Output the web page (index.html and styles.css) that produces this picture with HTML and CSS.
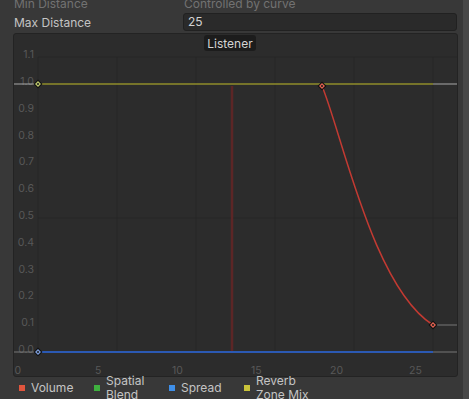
FILE: index.html
```html
<!DOCTYPE html>
<html lang="en">
<head>
  <meta charset="UTF-8">
  <title>Audio Source 3D Sound Settings</title>
  <link rel="stylesheet" href="styles.css">
</head>
<body>
  <div class="inspector">
    <div class="rows">
      <div class="row dimmed">
        <span class="label">Min Distance</span>
        <span class="value">Controlled by curve</span>
      </div>
      <div class="row">
        <span class="label">Max Distance</span>
        <span class="field">25</span>
      </div>
    </div>

    <div class="curve-box">
      <svg class="curve" width="443" height="342" viewBox="0 0 443 342">
        <!-- grid -->
        <g class="grid">
          <line x1="24" y1="23" x2="443" y2="23"/>
          <line x1="24" y1="184" x2="443" y2="184"/>
          <line x1="24" y1="23" x2="24" y2="318"/>
          <line x1="103" y1="23" x2="103" y2="318"/>
          <line x1="182" y1="23" x2="182" y2="318"/>
          <line x1="261" y1="23" x2="261" y2="318"/>
          <line x1="340" y1="23" x2="340" y2="318"/>
          <line x1="419" y1="23" x2="419" y2="318"/>
        </g>

        <!-- y axis -->
        <g class="axis-y">
          <text x="20" y="24.2">1.1</text>
          <text x="20" y="51">1.0</text>
          <text x="20" y="77.8">0.9</text>
          <text x="20" y="104.6">0.8</text>
          <text x="20" y="131.4">0.7</text>
          <text x="20" y="158.2">0.6</text>
          <text x="20" y="185">0.5</text>
          <text x="20" y="211.8">0.4</text>
          <text x="20" y="238.6">0.3</text>
          <text x="20" y="265.4">0.2</text>
          <text x="20" y="292.2">0.1</text>
          <text x="20" y="319">0.0</text>
        </g>

        <!-- x axis -->
        <g class="axis-x">
          <text x="0.5" y="340">0</text>
          <text x="81" y="340">5</text>
          <text x="158" y="340">10</text>
          <text x="237" y="340">15</text>
          <text x="316" y="340">20</text>
          <text x="395" y="340">25</text>
        </g>

        <!-- listener -->
        <line class="listener" x1="218" y1="52" x2="218" y2="318"/>

        <!-- wrap extensions -->
        <g class="wrap">
          <line class="bright" x1="0" y1="50" x2="24" y2="50"/>
          <line class="bright" x1="419" y1="50" x2="444" y2="50"/>
          <line x1="419" y1="291" x2="444" y2="291"/>
          <line x1="0" y1="318" x2="24" y2="318"/>
          <line x1="419" y1="318" x2="444" y2="318"/>
        </g>

        <!-- curves -->
        <line class="reverb" x1="24" y1="50" x2="419" y2="50"/>
        <path class="volume" d="M308,52 C328,100 359,253 419,291"/>
        <line class="spread" x1="24" y1="318" x2="419" y2="318"/>

        <!-- keys -->
        <g class="key key-reverb" transform="translate(24,50)">
          <path class="key-out" d="M0,-4.5 L4.5,0 L0,4.5 L-4.5,0 Z"/>
          <path class="key-in" d="M0,-3 L3,0 L0,3 L-3,0 Z"/>
          <circle class="key-dot" r="1"/>
        </g>
        <g class="key key-volume" transform="translate(308,52)">
          <path class="key-out" d="M0,-4.5 L4.5,0 L0,4.5 L-4.5,0 Z"/>
          <path class="key-in" d="M0,-3 L3,0 L0,3 L-3,0 Z"/>
          <circle class="key-dot" r="1"/>
        </g>
        <g class="key key-volume" transform="translate(419,291)">
          <path class="key-out" d="M0,-4.5 L4.5,0 L0,4.5 L-4.5,0 Z"/>
          <path class="key-in" d="M0,-3 L3,0 L0,3 L-3,0 Z"/>
          <circle class="key-dot" r="1"/>
        </g>
        <g class="key key-spread" transform="translate(24,318)">
          <path class="key-out" d="M0,-4.5 L4.5,0 L0,4.5 L-4.5,0 Z"/>
          <path class="key-in" d="M0,-3 L3,0 L0,3 L-3,0 Z"/>
          <circle class="key-dot" r="1"/>
        </g>

        <!-- listener tag -->
        <rect class="tag" x="190" y="1" width="52" height="16" rx="3"/>
        <text class="tag-text" x="216" y="13.5">Listener</text>
      </svg>
    </div>

    <div class="legend">
      <div class="legend-item"><span class="swatch red"></span><span>Volume</span></div>
      <div class="legend-item"><span class="swatch green"></span><span>Spatial<br>Blend</span></div>
      <div class="legend-item"><span class="swatch blue"></span><span>Spread</span></div>
      <div class="legend-item"><span class="swatch yellow"></span><span>Reverb<br>Zone Mix</span></div>
    </div>
  </div>
  <div class="scrollbar"></div>
</body>
</html>
```

FILE: styles.css
```css
html, body {
  margin: 0;
  height: 100%;
}
body {
  display: flex;
  background: #383838;
  font-family: Inter, "Noto Sans", sans-serif;
  font-size: 12px;
  color: #c4c4c4;
  overflow: hidden;
}
.inspector {
  flex: 1;
  padding: 0 5px 0 13px;
  display: flex;
  flex-direction: column;
}
.scrollbar {
  width: 6px;
  background: #474747;
}
.rows {
  margin-top: -6px;
  display: flex;
  flex-direction: column;
  gap: 1px;
}
.row {
  height: 18px;
  display: flex;
  align-items: center;
}
.row .label {
  width: 169px;
  padding-left: 1px;
}
.dimmed {
  color: #727272;
}
.dimmed .value {
  padding-left: 1px;
}
.field {
  flex: 1;
  height: 18px;
  box-sizing: border-box;
  margin-right: 1px;
  padding: 0 4px;
  line-height: 16px;
  background: #2a2a2a;
  border: 1px solid #212121;
  border-radius: 3px;
  color: #d2d2d2;
}
.curve-box {
  margin-top: 2px;
  height: 344px;
  box-sizing: border-box;
  background: #2c2c2c;
  border: 1px solid #232323;
  border-radius: 3px;
  overflow: hidden;
}
.curve {
  display: block;
}
.grid line {
  stroke: #262626;
  stroke-width: 1;
}
.axis-y text,
.axis-x text {
  font-family: Inter, "Noto Sans", sans-serif;
  font-size: 10.5px;
  fill: #585858;
}
.axis-y text {
  text-anchor: end;
}
.listener {
  stroke: #5c2626;
  stroke-width: 2.5;
}
.wrap line {
  stroke: #767676;
  stroke-width: 1;
}
.wrap line.bright {
  stroke: #a8a8a8;
}
.reverb {
  stroke: #8f8d2a;
  stroke-width: 1.5;
}
.volume {
  fill: none;
  stroke: #c23a32;
  stroke-width: 1.5;
}
.spread {
  stroke: #2b59b3;
  stroke-width: 2;
}
.key-out {
  fill: #111;
}
.key-dot {
  fill: #1a1a1a;
}
.key-reverb .key-in {
  fill: #b9c46a;
}
.key-volume .key-in {
  fill: #e06050;
}
.key-spread .key-in {
  fill: #7a9ad6;
}
.tag {
  fill: #1c1c1c;
}
.tag-text {
  font-family: Inter, "Noto Sans", sans-serif;
  font-size: 12px;
  fill: #d4d4d4;
  text-anchor: middle;
}
.legend {
  height: 22px;
  display: flex;
  align-items: center;
  padding-left: 6px;
}
.legend-item {
  width: 75px;
  display: flex;
  align-items: center;
  gap: 6px;
  line-height: 14px;
}
.swatch {
  width: 6px;
  height: 6px;
  flex: none;
}
.red { background: #e0553d; }
.green { background: #3fb13f; }
.blue { background: #3f8fe8; }
.yellow { background: #c9c33a; }
```
